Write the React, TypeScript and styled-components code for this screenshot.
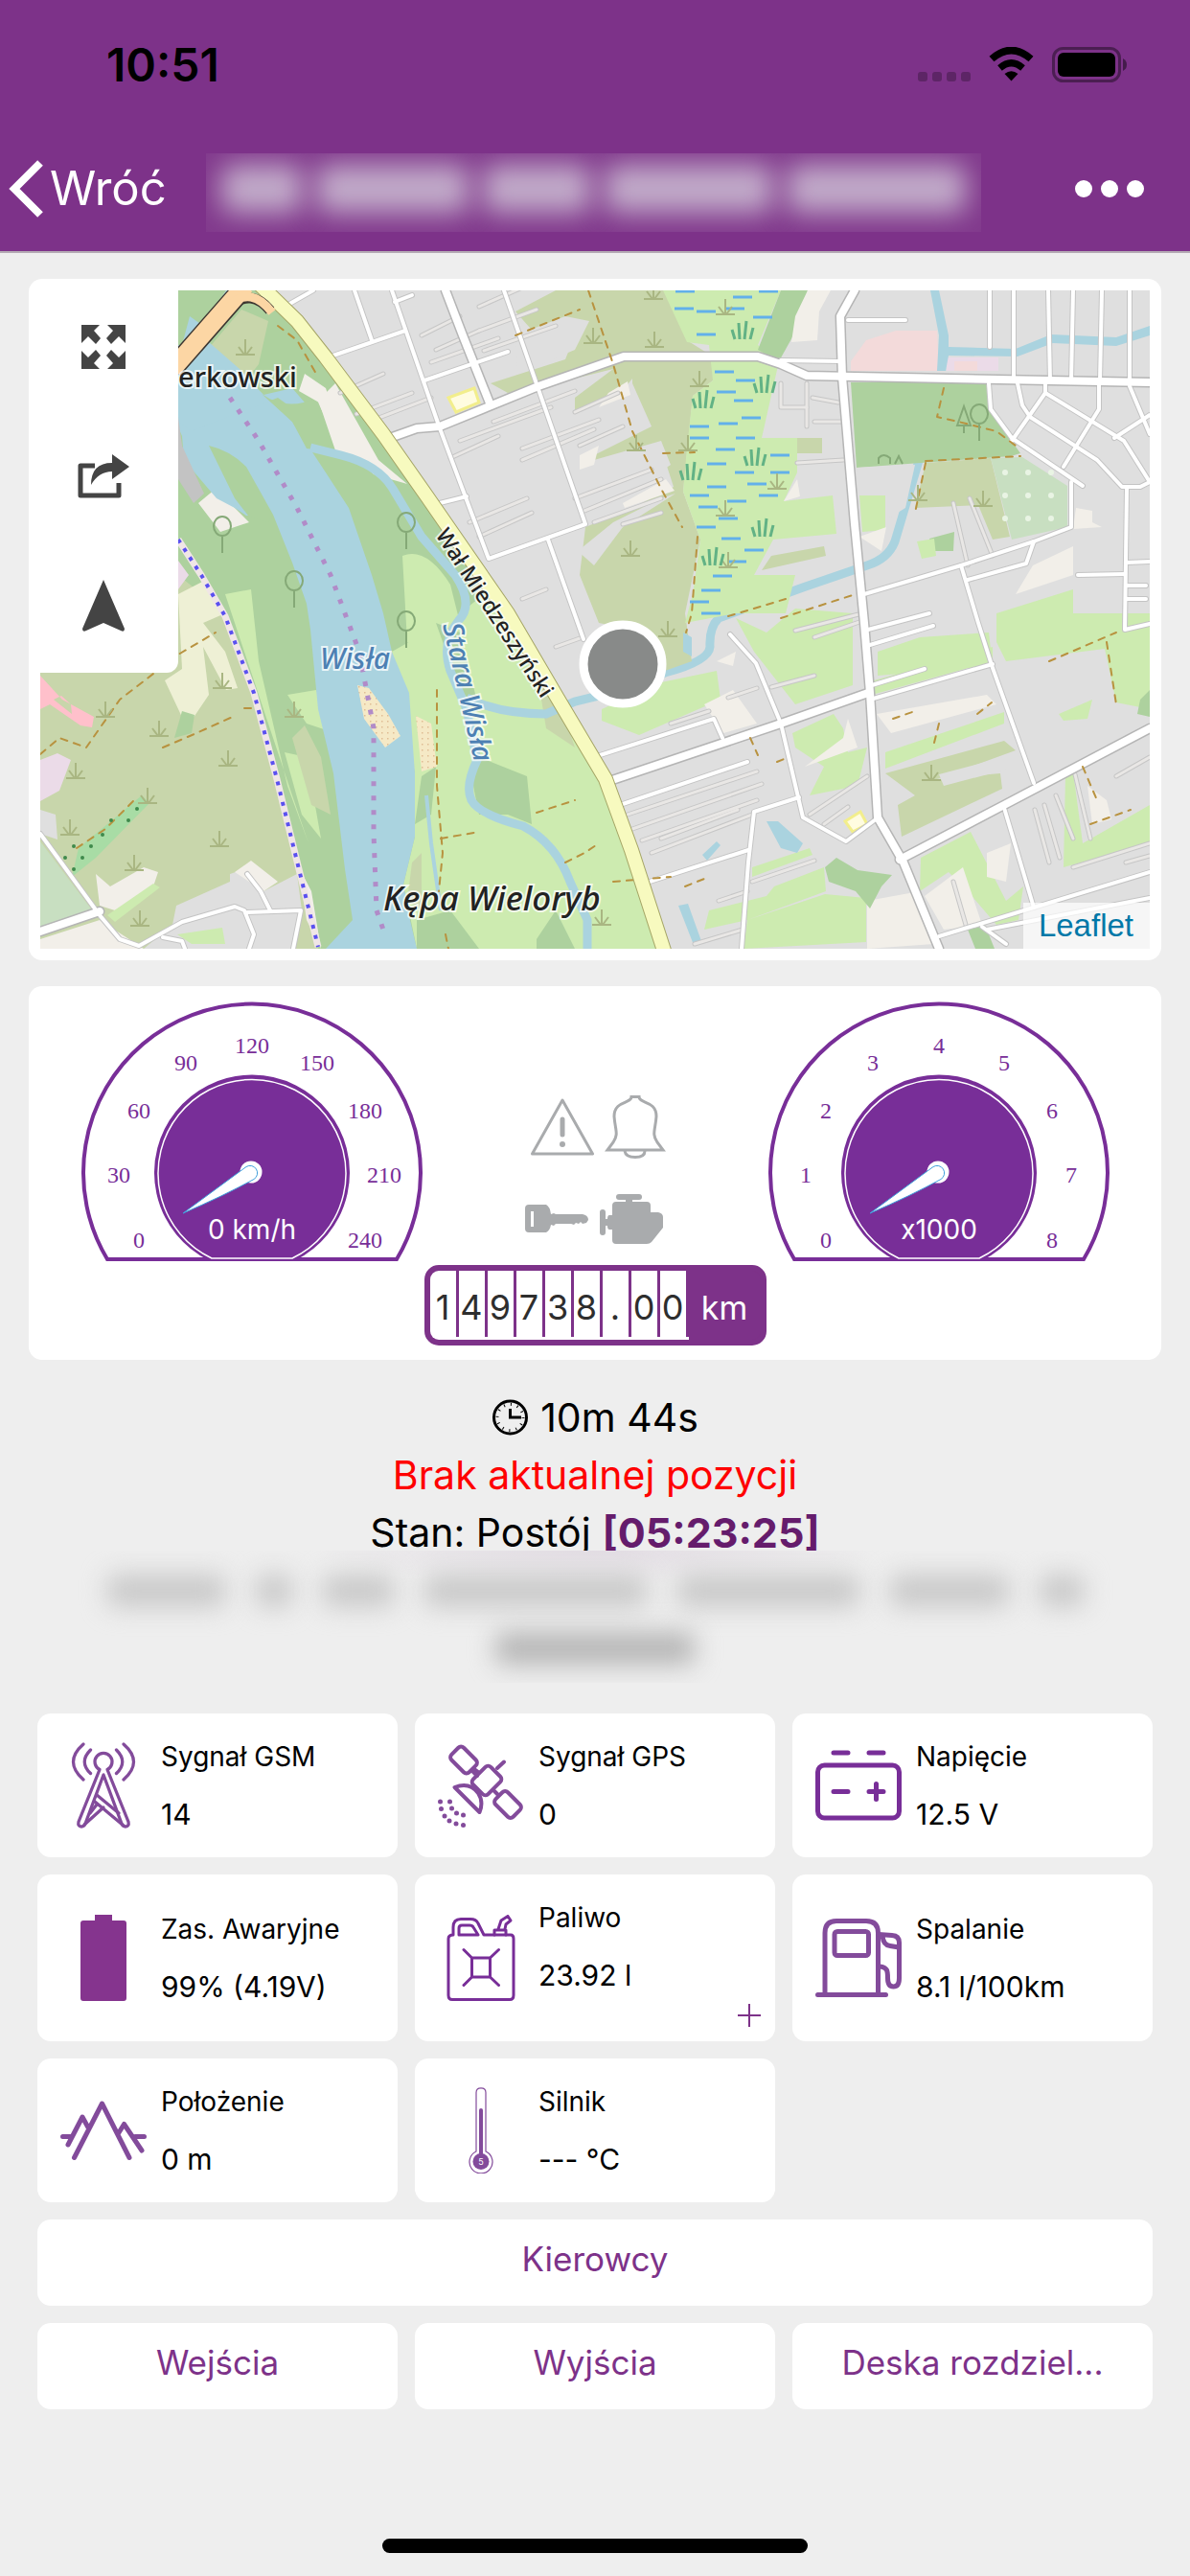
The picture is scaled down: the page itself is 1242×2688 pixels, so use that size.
import React from "react";
import styled, { createGlobalStyle } from "styled-components";

const color = {
  header: "#7d3289",
  gauge: "#782e98",
  icon: "#834b9b",
  page: "#eeeeee",
  muted: "#a9abad",
};

const GlobalStyle = createGlobalStyle`
  *, *::before, *::after { box-sizing: border-box; }
  body {
    margin: 0;
    background: ${color.page};
    color: #000;
    font-family: Inter, "Noto Sans", sans-serif;
  }
  button { font: inherit; color: inherit; background: none; border: 0; padding: 0; cursor: pointer; }
  svg { display: block; }
`;

const Page = styled.div`
  min-height: 100vh;
  display: flex;
  flex-direction: column;
`;

/* ---------- header ---------- */

const Header = styled.header`
  background: ${color.header};
  border-bottom: 2px solid #b3a9b3;
  color: #fff;
`;

const StatusBar = styled.div`
  height: 132px;
  padding: 4px 66px 0 111px;
  display: flex;
  align-items: center;
  justify-content: space-between;
  color: #000;
`;

const Clock = styled.span`
  font-size: 48px;
  line-height: 56px;
  font-weight: 600;
`;

const NavBar = styled.div`
  height: 130px;
  padding: 0 48px 0 9px;
  display: flex;
  align-items: center;
`;

const BackButton = styled.button`
  display: flex;
  align-items: center;
  gap: 7px;
  font-size: 49px;
  line-height: 60px;
`;

const HiddenTitle = styled.div`
  flex: 1;
  height: 82px;
  margin: 8px 98px 0 41px;
  padding: 0 16px 8px;
  overflow: hidden;
  display: flex;
  align-items: center;
  gap: 14px;
  background: rgba(255, 255, 255, 0.04);
`;

const TitleWord = styled.span<{ $grow: number }>`
  flex: ${(p) => p.$grow};
  height: 50px;
  border-radius: 12px;
  background: rgba(205, 190, 212, 0.85);
  filter: blur(14px);
`;

const MoreButton = styled.button`
  display: flex;
  align-items: center;
`;

/* ---------- content ---------- */

const Content = styled.main`
  padding: 27px 30px 0;
  display: flex;
  flex-direction: column;
`;

const Card = styled.section`
  background: #fff;
  border-radius: 14px;
`;

const MapCard = styled(Card)`
  position: relative;
  padding: 12px;
`;

const MapControls = styled.div`
  position: absolute;
  left: 12px;
  top: 12px;
  width: 144px;
  height: 399px;
  background: #fff;
  border-bottom-right-radius: 12px;
  display: grid;
  grid-template-rows: 118px 152px 118px;
`;

const MapControl = styled.button`
  display: flex;
  align-items: center;
  justify-content: center;
  padding-right: 12px;
`;

const Attribution = styled.a`
  position: absolute;
  right: 12px;
  bottom: 12px;
  height: 48px;
  padding: 0 17px 0 16px;
  background: rgba(255, 255, 255, 0.7);
  color: #0078a8;
  font: 33px/48px "Liberation Sans", Arial, sans-serif;
  text-decoration: none;
`;

const GaugeCard = styled(Card)`
  margin-top: 27px;
  padding: 14px 0 15px;
  display: flex;
  justify-content: center;
  align-items: flex-start;
`;

const Center = styled.div`
  padding-top: 100px;
  display: flex;
  flex-direction: column;
  align-items: center;
`;

const Indicators = styled.div`
  display: grid;
  grid-template-columns: 72px 72px;
  column-gap: 3px;
  row-gap: 37px;
`;

const Odometer = styled.div`
  margin-top: 21px;
  height: 84px;
  border: 6px solid ${color.header};
  border-radius: 15px;
  background: ${color.header};
  display: flex;
`;

const Digits = styled.div`
  display: flex;
  padding-bottom: 3px;
  background: #fff;
  border-radius: 9px 0 0 9px;
`;

const Digit = styled.span`
  width: 30px;
  border-right: 3px solid ${color.header};
  text-align: center;
  font-size: 36px;
  line-height: 76px;
  color: #2e2e2e;
`;

const Unit = styled.span`
  width: 75px;
  text-align: center;
  font-size: 34px;
  line-height: 77px;
  color: #fff;
`;

const Summary = styled.section`
  margin-top: 30px;
  text-align: center;
  font-size: 41px;
  line-height: 60px;
`;

const SummaryLine = styled.div<{ $alert?: boolean }>`
  height: 60px;
  display: flex;
  align-items: center;
  justify-content: center;
  gap: 12px;
  color: ${(p) => (p.$alert ? "#ff0000" : "#000")};
`;

const Duration = styled.strong`
  font-size: 43px;
  font-weight: 700;
  color: #651c6c;
`;

const HiddenAddress = styled.div`
  position: relative;
  height: 138px;
  margin-top: -11px;
  padding-top: 25px;
  overflow: hidden;
  background: radial-gradient(300px 36px at 50% 0, #e3dde4, ${color.page});
  display: flex;
  flex-direction: column;
  align-items: center;
  gap: 26px;
`;

const AddressRow = styled.div`
  display: flex;
  gap: 32px;
`;

const AddressWord = styled.span<{ $width: number; $dark?: boolean }>`
  width: ${(p) => p.$width}px;
  height: 34px;
  border-radius: 8px;
  background: ${(p) => (p.$dark ? "#b6b6b6" : "#c9c9c9")};
  filter: blur(13px);
`;

const Metrics = styled.section`
  margin: 32px 9px 0;
  display: grid;
  grid-template-columns: repeat(3, 1fr);
  gap: 18px;
`;

const Metric = styled(Card)`
  position: relative;
  padding: 15px 24px;
  min-height: 150px;
  display: flex;
  align-items: center;
  gap: 15px;
`;

const MetricText = styled.div<{ $extra?: boolean }>`
  line-height: 60px;
  margin-bottom: ${(p) => (p.$extra ? "24px" : "0")};
  white-space: nowrap;
`;

const MetricLabel = styled.div`
  font-size: 28px;
`;

const MetricValue = styled.div`
  font-size: 30px;
`;

const AddButton = styled.button`
  position: absolute;
  right: 15px;
  bottom: 15px;
`;

const Actions = styled.nav`
  margin: 18px 9px 0;
  display: grid;
  grid-template-columns: repeat(3, 1fr);
  gap: 18px;
`;

const Action = styled.button<{ $wide?: boolean }>`
  grid-column: ${(p) => (p.$wide ? "1 / -1" : "auto")};
  height: 90px;
  padding: 0 24px 8px;
  background: #fff;
  border-radius: 14px;
  color: ${color.header};
  font-size: 35px;
  line-height: 48px;
  white-space: nowrap;
`;

const HomeIndicator = styled.div`
  width: 444px;
  height: 15px;
  margin: auto auto 24px;
  border-radius: 8px;
  background: #000;
`;

/* ---------- map ---------- */

const MapSvg = styled.svg`
  width: 100%;
  height: 687px;
`;

const MapLabel = styled.text`
  font-family: "Noto Sans", sans-serif;
  font-weight: 500;
  paint-order: stroke;
  stroke: rgba(255, 255, 255, 0.75);
  stroke-width: 4px;
`;

const wideRoads = [
  "404,458 435,447 459,445 562,403 651,372 791,372 815,380 842,392 1200,399",
  "892,303 877,330 879,393 892,547 902,650 908,723 916,853 943,900 980,990",
  "939,897 1048,840 1200,760",
  "636,815 815,755 906,723",
  "465,303 483,350 512,423",
  "42,972 104,951",
];

const thinRoads = [
  "370,303 388,355", "342,373 423,345", "409,303 459,447 510,583 611,547 526,303",
  "443,397 530,367", "451,527 487,518", "572,563 603,650 609,667", "297,320 327,303", "412,315 430,308",
  "1003,590 1021,650 1036,697 1079,817", "902,620 1003,590 1079,565 1118,550 1118,503",
  "1079,565 1071,588 1010,605", "885,334 945,334", "815,376 877,377",
  "1033,303 1033,362", "1058,303 1058,398", "1094,303 1096,398", "1120,303 1118,398", "1150,303 1148,398", "1179,303 1179,398",
  "1032,400 1034,427 1056,457 1130,507", "1062,400 1067,423 1075,435 1145,480 1171,508 1190,508 1200,503",
  "1091,400 1091,410 1173,460 1200,503", "1091,410 1056,460", "1147,400 1147,427 1110,487",
  "1179,403 1200,453", "1200,433 1163,457", "1176,510 1174,657 1200,651", "1176,587 1200,586", "1176,611 1196,611",
  "1176,625 1196,625", "1125,600 1174,599", "906,657 970,640", "908,673 974,653", "908,730 1036,693", "910,715 965,698",
  "762,662 789,692 815,755 838,853 883,878 914,855", "834,832 787,847 781,900 774,990",
  "620,790 745,750 754,770", "647,840 780,795", "678,920 781,887", "1048,843 1079,947", "980,977 1200,910",
  "1025,967 1050,985", "1030,970 1200,937", "42,870 104,955 125,980 145,987 190,962 245,946 255,950 265,975 260,990",
  "258,952 314,950 306,990", "258,912 272,930 282,950", "170,978 190,982 193,990",
];

const alleys = [
  "355,410 400,390", "372,432 430,410", "385,440 450,415", "455,365 500,345", "440,350 480,330", "450,378 520,353",
  "500,320 545,300", "500,345 560,323", "505,366 580,340", "480,460 575,425", "470,478 520,455", "515,440 600,408",
  "545,480 620,448", "545,468 625,438", "490,545 550,520", "500,560 555,535", "545,625 570,615", "600,520 680,490",
  "610,533 690,500", "620,545 690,520", "605,465 650,445", "600,430 645,410", "650,547 690,535", "580,675 608,665",
  "655,850 790,805", "660,865 795,818", "670,877 790,835", "680,890 785,850", "690,875 770,845", "760,728 790,718",
  "805,717 850,705", "830,658 900,640", "850,665 900,648", "700,755 740,742", "845,850 905,810", "860,860 885,842",
  "1080,845 1095,900", "1090,840 1106,895", "1102,830 1120,875", "1122,808 1138,875", "1120,905 1200,880",
  "1175,900 1200,893", "1165,810 1200,790", "995,525 1010,590", "1012,520 1036,580", "815,400 815,425 842,425",
  "842,400 842,445", "848,415 875,420", "850,440 880,440", "832,483 880,480", "785,920 850,898", "750,940 780,930",
  "725,985 775,970", "995,920 1008,965",
];

const paths = [
  "538,350 605,323", "614,303 640,380 660,450 690,510 712,550", "692,473 725,472", "728,560 722,640 716,660",
  "290,340 310,355 330,390", "42,787 62,770 90,780 125,730 186,683 225,660", "170,780 205,765 245,747", "255,739 268,739",
  "80,885 110,865 140,835", "985,405 978,435 1000,440 1040,450 1060,465", "966,481 1065,476", "966,483 955,535",
  "815,645 893,620", "760,643 820,625", "932,750 955,742", "975,775 980,755", "1020,745 1035,733", "1095,690 1165,660",
  "1155,670 1165,735", "783,770 791,788", "811,795 823,790", "560,848 600,835", "460,875 500,868", "456,720 456,820 462,890 458,930",
  "590,900 610,890 625,880", "1130,800 1145,835", "1138,860 1180,845", "640,920 700,915", "715,925 735,917", "465,975 468,990",
];

const marshDashes: [number, number][] = [
  [705, 304], [792, 304], [765, 310], [704, 322], [727, 325], [757, 322], [786, 331], [727, 349], [768, 397], [746, 388],
  [766, 418], [748, 409], [774, 436], [750, 442], [720, 445], [720, 457], [768, 457], [747, 469], [804, 475], [738, 484],
  [767, 493], [804, 493], [738, 508], [780, 505], [720, 517], [792, 517], [759, 523], [729, 529], [750, 541], [727, 550],
  [753, 562], [777, 574], [759, 586], [744, 601], [732, 616], [720, 628], [732, 640],
];

const tufts: [number, number][] = [
  [256, 370], [619, 358], [682, 312], [757, 328], [683, 362], [730, 403], [664, 470], [718, 470], [811, 510], [757, 538],
  [658, 580], [760, 592], [697, 664], [958, 522], [1026, 528], [972, 814], [110, 748], [166, 768], [232, 718], [79, 812],
  [238, 799], [154, 838], [73, 871], [229, 883], [140, 908], [146, 966], [307, 748], [628, 965],
];

const reeds: [number, number][] = [[775, 354], [798, 410], [734, 426], [788, 486], [721, 501], [796, 560], [744, 590]];

const trees: [number, number][] = [[424, 545], [232, 549], [307, 606], [424, 648], [1022, 432]];

const CityMap = () => (
  <MapSvg viewBox="42 303 1158 687" preserveAspectRatio="xMidYMid slice" role="img" aria-label="Mapa">
    <defs>
      <pattern id="sand" width="6" height="6" patternUnits="userSpaceOnUse">
        <rect width="6" height="6" fill="#f5e9c6" />
        <rect x="2" y="2" width="1.5" height="1.5" fill="#e0bd95" />
      </pattern>
    </defs>
    <rect x="42" y="303" width="1158" height="687" fill="#dfdfdf" />

    {/* west bank and floodplain */}
    <path fill="#add19e" d="M42 303H277L340 373 400 453 447 520 530 640 581 727 632 813 694 990H42Z" />
    <path fill="#cdebb0" d="M409 680L480 640 514 613 581 727 632 813 694 990H435L421 923 433 873 433 807Z" />
    <path fill="#cdebb0" d="M420 580Q445 570 470 610L480 650 465 690 425 670ZM235 620L262 615 270 690 300 820 322 880 305 830ZM300 725L330 720 350 765 320 755ZM297 785L320 790 335 875 315 850Z" />
    <path fill="#add19e" d="M455 650L480 660 500 740 480 720ZM500 790L550 810 555 860 530 850 500 850 492 810ZM440 810L455 800 450 850 433 860ZM560 980L580 950 600 990H560ZM435 960L470 950 500 990H435Z" />
    <path fill="#c8d6ab" d="M218 363L252 323 280 335 270 380 250 406ZM318 757L335 790 345 850 325 840 305 770ZM430 900L440 890 440 950 425 940ZM560 700L590 750 600 780 570 760Z" />
    <path fill="#f2efe9" d="M330 420L350 400 395 480 425 505 390 495 360 465ZM207 525L225 510 260 545 230 555Z" />

    {/* fields in the south-west */}
    <path fill="#c8d6ab" d="M42 303H42V702L186 600 235 640 265 723 289 813 312 907 332 990H42Z" />
    <path fill="#eef0d5" d="M186 620L215 605 235 640 212 650 235 680 248 718 236 720 212 675 218 725 195 759 172 710 190 698Z" />
    <path fill="#ffc0cb" fillRule="evenodd" d="M42 705L65 730 98 748 96 759 84 757 52 735 42 740ZM56 730L75 745 74 735 64 726Z" />
    <path fill="#ebdbe8" d="M42 793L60 786 74 793 62 825 42 836ZM186 585L197 600 186 615Z" />
    <path fill="#a8dca5" d="M82 885L148 830 156 838 100 895 75 915Z" />
    <path fill="#add19e" d="M190 742L203 746 200 765 182 770Z" />
    <path fill="#dfdfdf" d="M42 845L58 850 60 876 42 870ZM184 945L240 920 240 912 260 905 275 930 310 912 315 950 308 990H150L180 965Z" />
    <path fill="#c8dfc1" d="M42 878L100 955 42 975Z" />
    <path fill="#f2efe9" d="M100 912L115 925 150 905 165 910 160 925 120 950 104 945ZM42 980L104 960 150 990H42ZM245 910L262 898 290 920 275 930ZM312 905L325 930 335 990 320 960Z" />
    <path fill="#cdebb0" d="M112 955L160 922 167 926 120 962ZM185 975L232 968 235 985 200 985Z" />

    {/* river */}
    <path fill="#aad3df" d="M170 410L186 303H245L186 400V345L218 363 250 395 273 410 305 440 336 487 364 530 388 600 400 640 409 680 427 723 433 807 433 873 421 923 428 960 435 990H340L368 960 360 907 348 807 332 740 324 657 320 630 305 587 285 537 257 538 245 530 226 520 192 480 190 455Z" />
    <path fill="#aad3df" d="M186 375L210 350 250 385 275 412 305 405 318 420 308 428 290 415 200 450 186 440Z" />
    <path fill="#add19e" d="M186 303H236L212 340 198 330 190 360H186Z" />
    <path fill="#add19e" d="M218 465Q240 470 257 487L285 537 280 545 259 538 245 520Z" />
    <path fill="#add19e" d="M273 411Q300 430 330 415L350 460 335 470 320 468 305 440Z" />
    <path fill="#f2efe9" d="M318 390L340 405 358 460 395 490 350 470 333 420 312 408Z" />
    <path fill="#c3c3c3" d="M186 435L190 465 213 515 202 525 186 500Z" />
    <path fill="url(#sand)" d="M373 715L385 718 405 745 418 768 402 780 380 750ZM434 747L450 755 456 800 440 805Z" />
    <g fill="none" stroke="#aad3df" strokeWidth="9">
      <path d="M324 467L356 475Q395 485 410 510L440 560 475 600Q495 630 479 647 460 670 470 700L487 740 498 793Q485 820 492 835 500 850 546 862 580 880 595 920L613 960V990" />
      <path d="M487 728Q520 745 570 745L600 732 650 720 694 702Q740 690 741 675 740 655 750 645L838 613 905 590Q927 583 934 565L982 403" />
      <path d="M445 830L450 880 460 950" strokeWidth="4" />
    </g>
    <path stroke="#b18bc8" strokeWidth="5" strokeDasharray="5 10" fill="none" d="M240 415L270 460 310 530 345 600 375 680 390 760V870L393 950 400 970" />
    <path stroke="#f0e6e6" strokeWidth="7" fill="none" d="M186 563L210 600 235 643 265 723 289 813 312 907 332 988" />
    <path stroke="#5a50f0" strokeWidth="4" strokeDasharray="4 7" fill="none" d="M186 563L210 600 235 643 265 723 289 813 312 907 332 988" />

    {/* meadow and marsh east of the embankment */}
    <path fill="#c8d6ab" d="M538 325L580 303H700L720 357 744 372 744 397 723 413 713 513 731 563 715 640 722 690 694 700 650 655 625 650 605 600 611 550 660 530 703 508 694 480 620 500 610 480 680 445 660 400 600 430 600 415 640 385 560 405 530 410 512 400 590 375 600 350 560 350Z" />
    <path fill="#dfdfdf" d="M538 350L590 330 615 335 600 365 540 390ZM575 440L640 420 660 395 660 410 600 450 620 480 690 460 700 485 640 525 605 530ZM603 575L640 545 690 520 705 515 650 550 620 590Z" />
    <path fill="#f2efe9" d="M635 410L655 398 658 412 625 425ZM650 525L695 500 704 512 652 530ZM605 475L625 465 620 485 605 490Z" />
    <path fill="#cdebb0" d="M692 303H815L791 360 813 377 795 457H832V493L818 523 869 517 873 557 807 563 787 600 830 600 820 640 768 640 715 650 723 620 731 563 713 513 717 467 723 413 744 397 740 360 717 357Z" />
    <path fill="#add19e" d="M815 303H843L828 350 813 377 791 365Z" />
    <path fill="#f2efe9" d="M843 303H867L855 325 853 355 826 357 830 330ZM818 523L832 500 835 518Z" />
    <path fill="#c8d6ab" d="M832 457H858V473H832ZM805 580L860 570 862 580 795 595ZM966 483L1034 478 1054 560 1036 563 1021 527 955 530Z" />
    <path fill="#add19e" d="M888 399H1030L1034 430 1065 473 1055 476 894 488ZM970 562L996 555 995 575 975 575Z" />
    <path fill="#dfdfdf" d="M894 488L955 485 945 530 896 560Z" />
    <path fill="#c8dfc1" d="M1034 478L1067 477 1114 507V550L1056 563Z" />
    <path fill="#f3dada" d="M888 387V377L904 355 935 345H978L980 387Z" />
    <path fill="#ebdbe8" d="M988 373H1042V387H988Z" />
    <path fill="#f3dada" d="M996 377H1020V387H996Z" />
    <path fill="#aad3df" d="M971 303H980L990 350V362L1060 364 1097 349 1165 352 1200 340V350L1165 361 1099 358 1062 372 990 371 987 387H978L980 350Z" />
    <path fill="#cdebb0" d="M897 517H924V553L900 555ZM957 565L975 562 977 580 962 583ZM800 660L830 635 890 640V715L830 735 787 680 768 645ZM628 740L690 712 748 700 752 730 667 767 628 752ZM916 680L960 665 1032 660 1036 695 916 705ZM1040 640L1120 615V640H1200V740L1165 733 1153 677 1050 690 1040 670ZM1105 745L1140 730 1135 750 1110 752ZM924 785L1048 743V755L924 802ZM827 765L870 745 880 760 885 785 905 780 895 820 845 830 860 800 830 780ZM961 895L1013 868 1050 940 1068 925 1063 960 1040 965 1010 930 990 910 960 930ZM1112 810L1120 805 1130 880 1200 840V880L1110 905ZM780 960L861 933 904 937V983L776 990ZM808 925L860 905 862 930 780 960 735 970 740 950 800 935ZM785 905L845 885 848 892 785 915ZM905 712L1036 675 1036 690 910 725Z" />
    <path fill="#f2efe9" d="M748 690L765 695 768 680ZM735 735L765 720 790 755 755 765ZM1078 590L1120 570V600L1060 620ZM1123 530L1140 533 1140 545 1150 550 1120 552ZM915 745L1030 725 1040 735 930 765ZM840 800L880 770 885 750 895 780ZM905 940L960 930 975 985 905 990ZM965 935L1005 905 1025 965 985 970ZM1030 890L1055 880 1050 920 1030 915ZM1135 820L1155 835 1160 855 1140 860ZM897 560L925 550 920 575Z" />
    <path fill="#c8d6ab" d="M924 807L1048 773 1060 783 978 813 1044 807 1046 823 941 873 937 840 955 830Z" />
    <path fill="#dfdfdf" d="M980 808L1048 790 1050 803 985 820Z" />
    <path fill="#add19e" d="M873 895L895 908 931 913 920 925 908 948 893 930 865 920 861 905ZM1190 730L1200 720V748L1187 745ZM1010 970L1028 965 1038 990H1018Z" />
    <path fill="#aad3df" d="M800 857L812 857 838 880 832 890 815 885ZM733 892L748 878 752 882 738 898ZM708 945L718 943 732 982 724 986ZM713 660L722 665 722 685 713 680Z" />
    <path fill="#fffce0" stroke="#f2ee8c" strokeWidth="3" d="M468 415L495 405 500 420 476 430ZM882 857L898 847 905 860 890 868Z" />

    {/* streets */}
    <g fill="none" strokeLinejoin="round" strokeLinecap="round">
      {alleys.map((p) => <polyline key={p} points={p} stroke="#c6c6c6" strokeWidth="5" />)}
      {alleys.map((p) => <polyline key={p} points={p} stroke="#e9e7e5" strokeWidth="3" />)}
      {thinRoads.map((p) => <polyline key={p} points={p} stroke="#c4c4c4" strokeWidth="6" />)}
      {wideRoads.map((p) => <polyline key={p} points={p} stroke="#b5b5b5" strokeWidth="11" />)}
      {thinRoads.map((p) => <polyline key={p} points={p} stroke="#fff" strokeWidth="4" />)}
      {wideRoads.map((p) => <polyline key={p} points={p} stroke="#fff" strokeWidth="8" />)}
      {paths.map((p) => <polyline key={p} points={p} stroke="#b8923f" strokeWidth="2" strokeDasharray="7 7" />)}
    </g>
    <g fill="none" strokeLinejoin="round">
      <path stroke="#a5a566" strokeWidth="16" d="M270 296L310 335 340 373 400 453 447 520 530 640 581 727 632 813 659 887 694 995" />
      <path stroke="#f7fabf" strokeWidth="14" d="M270 296L310 335 340 373 400 453 447 520 530 640 581 727 632 813 659 887 694 995" />
      <path stroke="#3b3530" strokeWidth="22" d="M180 385L252 303" />
      <path stroke="#3b3530" strokeWidth="11" d="M240 320Q262 300 282 324" />
      <path stroke="#fcd6a4" strokeWidth="19" d="M180 385L256 298" />
      <path stroke="#fcd6a4" strokeWidth="9" d="M240 318Q262 298 284 326" />
    </g>

    {/* vegetation symbols */}
    <g stroke="#62b0ea" strokeWidth="3">
      {marshDashes.map(([x, y]) => <path key={`${x}-${y}`} d={`M${x} ${y}h20`} />)}
    </g>
    <g fill="none" stroke="#a9b682" strokeWidth="2">
      {tufts.map(([x, y]) => <path key={`${x}-${y}`} d={`M${x - 10} ${y}h20M${x} ${y}v-16M${x - 1} ${y}l-6 -8M${x + 1} ${y}l6 -8`} />)}
    </g>
    <g fill="none" stroke="#62b285" strokeWidth="3">
      {reeds.map(([x, y]) => <path key={`${x}-${y}`} d={`M${x - 8} ${y}l-3 -10M${x - 3} ${y}l-1 -17M${x + 2} ${y}l2 -19M${x + 8} ${y}l3 -12`} />)}
    </g>
    <g fill="none" stroke="#85a977" strokeWidth="2">
      {trees.map(([x, y]) => <path key={`${x}-${y}`} d={`M${x} ${y + 28}V${y + 10}M${x - 9} ${y}a9 10 0 1 1 18 0a9 10 0 1 1 -18 0`} />)}
      <path d="M1006 452V444M999 444L1006 424 1013 444ZM917 484V478Q922 472 929 478V484M934 484L938 476 942 484" />
    </g>
    <g fill="#e9f4e4">
      {[1049, 1073, 1097].map((x) => [493, 517, 541].map((y) => <circle key={`${x}-${y}`} cx={x} cy={y} r="3" />))}
    </g>
    <g fill="#3f8a4c">
      {[[143, 844], [116, 856], [134, 856], [107, 871], [95, 883], [77, 883], [68, 895], [86, 895], [77, 907]].map(([x, y]) => (
        <circle key={`${x}-${y}`} cx={x} cy={y} r="2" />
      ))}
    </g>

    {/* place names */}
    <MapLabel x="186" y="404" fontSize="29" fill="#222">erkowski</MapLabel>
    <MapLabel x="334" y="698" fontSize="30" fontStyle="italic" fill="#4d80b3">Wisła</MapLabel>
    <MapLabel x="400" y="950" fontSize="35" fontStyle="italic" fill="#222">Kępa Wieloryb</MapLabel>
    <MapLabel fontSize="23" fill="#222" transform="translate(454 558) rotate(57)">Wał Miedzeszyński</MapLabel>
    <MapLabel fontSize="29" fontStyle="italic" fill="#4d80b3" transform="translate(462 652) rotate(77)">Stara Wisła</MapLabel>

    <circle cx="650" cy="693" r="41" fill="#888a89" stroke="#fff" strokeWidth="9" />
  </MapSvg>
);

/* ---------- gauges ---------- */

const GaugeSvg = styled.svg`
  width: 360px;
  height: 276px;
  flex: none;
`;

const TickLabel = styled.text`
  font: 24px "Liberation Serif", "Times New Roman", serif;
  fill: ${color.gauge};
  text-anchor: middle;
`;

const GaugeValue = styled.text`
  font: 28px Inter, sans-serif;
  fill: #fff;
  text-anchor: middle;
`;

const tickPositions: [number, number][] = [
  [62, 259], [41, 191], [62, 124], [111, 74], [180, 56], [248, 74], [298, 124], [318, 191], [298, 259],
];

const Gauge = ({ ticks, value, label }: { ticks: string[]; value: string; label: string }) => (
  <GaugeSvg viewBox="0 0 360 276" role="img" aria-label={label}>
    <path d="M29 271A176 176 0 1 1 331 271Z" fill="#fff" stroke={color.gauge} strokeWidth="4" />
    <path d="M135 271A101 101 0 1 1 225 271Z" fill={color.gauge} stroke={color.gauge} strokeWidth="2" />
    <path d="M138 270A98 98 0 1 1 222 270Z" fill={color.gauge} stroke="#fff" strokeWidth="1.5" />
    {ticks.map((t, i) => (
      <TickLabel key={t} x={tickPositions[i][0]} y={tickPositions[i][1]}>{t}</TickLabel>
    ))}
    <circle cx="179" cy="180" r="11.5" fill="#fff" />
    <path d="M108 223L174 174.5A7.5 7.5 0 1 1 182 187.500Q150 205 108 223Z" fill="#fff" stroke="#3f9fdc" strokeWidth="1" />
    <GaugeValue x="180" y="250">{value}</GaugeValue>
  </GaugeSvg>
);

/* ---------- icons ---------- */

const ExpandIcon = () => (
  <svg width="46" height="46" viewBox="0 0 46 46" fill="#444">
    <path d="M0 0H19L13 6 20 14 15 20 7 12 0 19ZM46 0V19L39 12 31 20 26 14 33 6 27 0ZM0 46V27L7 34 15 26 20 32 13 40 19 46ZM46 46H27L33 40 26 32 31 26 39 34 46 27Z" />
  </svg>
);

const ShareIcon = () => (
  <svg width="54" height="46" viewBox="0 0 54 46">
    <path d="M18 12H3V43H43V30" fill="none" stroke="#444" strokeWidth="5" strokeLinejoin="round" />
    <path d="M14 32Q14 9 36 9V0L54 13 36 26V18Q22 18 14 32Z" fill="#444" />
  </svg>
);

const ArrowIcon = () => (
  <svg width="46" height="56" viewBox="0 0 46 56" fill="#444">
    <path d="M23 1L45 52Q45 56 41 54L23 46 5 54Q1 56 1 52Z" />
  </svg>
);

const StatusIcons = () => (
  <svg width="219" height="38" viewBox="957 49 219 38" aria-hidden="true">
    <g fill="#000" opacity="0.25">
      {[963, 978, 993, 1008].map((x) => <rect key={x} x={x - 5} y="75" width="10" height="10" rx="3" />)}
    </g>
    <g fill="none" stroke="#000">
      <path d="M1035 61.500Q1055.500 43.500 1076 61.500" strokeWidth="7.500" />
      <path d="M1043.500 71Q1055.500 60.500 1067.500 71" strokeWidth="7" />
    </g>
    <path d="M1048.500 77Q1055.500 71.500 1062.500 77L1055.500 84.500Z" />
    <rect x="1099.500" y="50.500" width="69" height="34" rx="10" fill="none" stroke="#000" strokeWidth="3" opacity="0.4" />
    <rect x="1104" y="55" width="60" height="25" rx="6" />
    <path d="M1172 61Q1176 63 1176 67.500 1176 72 1172 74Z" opacity="0.45" />
  </svg>
);

const WarningIcon = () => (
  <svg width="72" height="66" viewBox="0 0 72 66" fill="none" stroke={color.muted} strokeLinecap="round" strokeLinejoin="round">
    <path d="M39 5L70.500 61H7.500Z" strokeWidth="3" />
    <path d="M39 25V41" strokeWidth="5" />
    <circle cx="39" cy="51" r="3" fill={color.muted} stroke="none" />
  </svg>
);

const BellIcon = () => (
  <svg width="72" height="66" viewBox="0 0 72 66" fill="none" stroke={color.muted} strokeWidth="3">
    <path d="M36 1.500H44C44 9 62 5 62 22C61 36 57 40 63 49L69 57H11L17 49C23 40 19 36 18 22C18 5 36 9 36 1.500Z" />
    <path d="M29 58Q30 64.500 40 64.500T50 58" />
  </svg>
);

const KeyIcon = () => (
  <svg width="72" height="53" viewBox="0 0 72 53" fill={color.muted}>
    <path fillRule="evenodd" d="M4 11H22Q26 13 27 21L30 20 32 21H60Q66 22 66 27L64 30 60 31 58 29 56 31 53 30 51 32 48 31H32L30 33 27 32Q26 38 22 40H4Q0 40 0 36V15Q0 11 4 11ZM6 18V34H9V18Z" />
  </svg>
);

const EngineIcon = () => (
  <svg width="72" height="53" viewBox="0 0 72 53" fill={color.muted}>
    <rect x="20" width="27" height="6" rx="3" />
    <rect x="30" y="4" width="7" height="6" />
    <path d="M20 8H52Q56 8 56 12V19H64Q69 20 69 24V35L57 50Q55 52 52 52H20Q16 52 16 48V37H13Q11 37 11 33H9V40Q9 43 6 43T3 40V19Q3 16 6 16T9 19V26H11Q11 22 13 22H16V12Q16 8 20 8Z" />
  </svg>
);

const TimeIcon = () => (
  <svg width="39" height="38" viewBox="0 0 39 38" fill="none" stroke="#000">
    <circle cx="19.500" cy="19" r="17" strokeWidth="3" />
    <circle cx="19.500" cy="19" r="13.500" strokeWidth="3" strokeDasharray="1 6.070" />
    <path d="M19.500 10V19H31" strokeWidth="3" />
  </svg>
);

const Icon90Svg = styled.svg`
  width: 90px;
  height: 90px;
  flex: none;
`;

const Icon90 = (props: React.SVGProps<SVGSVGElement>) => (
  <Icon90Svg
    viewBox="0 0 90 90"
    fill={props.fill ?? "none"}
    stroke={props.stroke ?? color.icon}
    strokeWidth={props.strokeWidth}
    strokeLinecap="round"
    strokeLinejoin="round"
    aria-hidden="true"
  >
    {props.children}
  </Icon90Svg>
);

const TowerIcon = () => (
  <Icon90 strokeWidth="3.3">
    <path d="M24 2Q3 20.500 24 39M31.500 8Q19 20.500 31.500 32.500M66 2Q87 20.500 66 39M58.500 8Q71 20.500 58.500 32.500" />
    <path d="M41 28.500A9 9 0 1 1 49 28.500L71 83Q72 88 68 88 65 88 64 85L45 34 26 85Q25 88 22 88 18 88 19 83Z" />
    <path d="M38 55L61 74M36 62L66 87M45 68L25 86M38 65L31 74" />
  </Icon90>
);

const SatelliteIcon = () => (
  <Icon90 strokeWidth="4">
    <rect x="-9" y="-13" width="18" height="26" rx="4" transform="translate(27 18.500) rotate(-45)" />
    <rect x="-11" y="-13" width="22" height="26" rx="4" transform="translate(51 40) rotate(45)" />
    <rect x="-9" y="-13" width="18" height="26" rx="4" transform="translate(73 65) rotate(-45)" />
    <path d="M37 31L41 35M38 28L42 31M59 51L63 55M62 27L69 20.500M17.500 47L43.500 73Q48 62 42 53 33 41 17.500 47Z" />
    <g fill={color.icon} stroke="none">
      {[[2.5, 62], [12.500, 62], [3.5, 69.500], [14.500, 69], [7, 77], [19.500, 74], [12, 82], [26.500, 76], [19, 85], [26.500, 86.500]].map(([x, y]) => (
        <circle key={`${x}-${y}`} cx={x} cy={y} r="2.500" />
      ))}
    </g>
  </Icon90>
);

const AccumulatorIcon = () => (
  <Icon90 stroke={color.gauge} strokeWidth="5">
    <rect x="2.500" y="24" width="85" height="55" rx="7" />
    <path d="M19 11H34M56 11H71M19 51.500H34M56 51.500H71M63.500 43.500V59.500" />
  </Icon90>
);

const BatteryIcon = () => (
  <Icon90 stroke="none" fill="#85348e">
    <path d="M36 0H54V6H66Q69 6 69 9V87Q69 90 66 90H24Q21 90 21 87V9Q21 6 24 6H36Z" />
  </Icon90>
);

const CanisterIcon = () => (
  <Icon90 stroke={color.gauge} strokeWidth="3">
    <path d="M16 21V13Q16 4.500 24 4.500H34Q40 4.500 42 9L48 21H76Q79 21 79 25V84Q79 88.500 75 88.500H15Q11 88.500 11 84V25Q11 21 16 21Z" />
    <path d="M22 21V14Q22 11 25 11H33Q36 11 37 13L42 21ZM59 21V16H71V21M63 15L66 6 73 1.500 76 6 71 10 70 15" />
    <path d="M35.500 45H54.500V65H35.500ZM27 36.500L35.500 45M63.500 36.500L54.500 45M27 73.500L35.500 65M63.500 73.500L54.500 65" />
  </Icon90>
);

const PumpIcon = () => (
  <Icon90 strokeWidth="5">
    <path d="M2.500 83.500H73.500M10 83V19Q10 6.500 22 6.500H53Q65.500 6.500 65.500 19V83" />
    <rect x="20" y="17.500" width="35.500" height="25" rx="3" />
    <path d="M66 20.500L80 21.500Q87.500 22 87.500 29V66Q87.500 75 81.500 75T75.500 66C75.500 58 75 55 67 54M70 22Q71 32 78 32.500L87 34" />
  </Icon90>
);

const MountainIcon = () => (
  <Icon90 strokeWidth="5">
    <path d="M14.500 73.500L43.500 17 72 73.500M8 60L23 31 29 42M60 49L66.500 38.500 85 66M2.500 51.500H12M78 51.500H87.500" />
  </Icon90>
);

const BulbText = styled.text`
  font: 9px Inter, sans-serif;
  fill: #fff;
  stroke: none;
  text-anchor: middle;
`;

const ThermometerIcon = () => (
  <Icon90 strokeWidth="1.200">
    <path d="M40 67V5.500Q40 .8 45 .8T50 5.500V67A12 12 0 1 1 40 67Z" />
    <path d="M45 24V72" strokeWidth="4" />
    <circle cx="45" cy="77.500" r="8.500" fill={color.icon} stroke="none" />
    <BulbText x="45" y="81">5</BulbText>
  </Icon90>
);

/* ---------- page ---------- */

const metrics: { label: string; value: string; icon: React.ReactNode; addable?: boolean }[] = [
  { label: "Sygnał GSM", value: "14", icon: <TowerIcon /> },
  { label: "Sygnał GPS", value: "0", icon: <SatelliteIcon /> },
  { label: "Napięcie", value: "12.5 V", icon: <AccumulatorIcon /> },
  { label: "Zas. Awaryjne", value: "99% (4.19V)", icon: <BatteryIcon /> },
  { label: "Paliwo", value: "23.92 l", icon: <CanisterIcon />, addable: true },
  { label: "Spalanie", value: "8.1 l/100km", icon: <PumpIcon /> },
  { label: "Położenie", value: "0 m", icon: <MountainIcon /> },
  { label: "Silnik", value: "--- °C", icon: <ThermometerIcon /> },
];

export default function App() {
  return (
    <Page>
      <GlobalStyle />
      <Header>
        <StatusBar>
          <Clock>10:51</Clock>
          <StatusIcons />
        </StatusBar>
        <NavBar>
          <BackButton type="button">
            <svg width="36" height="60" viewBox="0 0 36 60" fill="none" stroke="#fff" strokeWidth="8">
              <path d="M33 3L6 30 33 57" />
            </svg>
            Wróć
          </BackButton>
          <HiddenTitle>
            {[80, 150, 105, 165, 175].map((w, i) => <TitleWord key={i} $grow={w} />)}
          </HiddenTitle>
          <MoreButton type="button" aria-label="Więcej">
            <svg width="72" height="18" viewBox="0 0 72 18" fill="#fff">
              <circle cx="9" cy="9" r="9" />
              <circle cx="36" cy="9" r="9" />
              <circle cx="63" cy="9" r="9" />
            </svg>
          </MoreButton>
        </NavBar>
      </Header>

      <Content>
        <MapCard>
          <CityMap />
          <MapControls>
            <MapControl type="button" aria-label="Pełny ekran"><ExpandIcon /></MapControl>
            <MapControl type="button" aria-label="Udostępnij"><ShareIcon /></MapControl>
            <MapControl type="button" aria-label="Nawiguj"><ArrowIcon /></MapControl>
          </MapControls>
          <Attribution href="#leaflet">Leaflet</Attribution>
        </MapCard>

        <GaugeCard>
          <Gauge label="Prędkość" value="0 km/h" ticks={["0", "30", "60", "90", "120", "150", "180", "210", "240"]} />
          <Center>
            <Indicators>
              <WarningIcon />
              <BellIcon />
              <KeyIcon />
              <EngineIcon />
            </Indicators>
            <Odometer>
              <Digits>
                {"149738.00".split("").map((d, i) => <Digit key={i}>{d}</Digit>)}
              </Digits>
              <Unit>km</Unit>
            </Odometer>
          </Center>
          <Gauge label="Obroty" value="x1000" ticks={["0", "1", "2", "3", "4", "5", "6", "7", "8"]} />
        </GaugeCard>

        <Summary>
          <SummaryLine><TimeIcon />10m 44s</SummaryLine>
          <SummaryLine $alert>Brak aktualnej pozycji</SummaryLine>
          <SummaryLine>Stan: Postój <Duration>[05:23:25]</Duration></SummaryLine>
        </Summary>
        <HiddenAddress>
          <AddressRow>
            {[123, 38, 74, 232, 190, 124, 46].map((w) => <AddressWord key={w} $width={w} />)}
          </AddressRow>
          <AddressRow>
            <AddressWord $width={208} $dark />
          </AddressRow>
        </HiddenAddress>

        <Metrics>
          {metrics.map((m) => (
            <Metric key={m.label}>
              {m.icon}
              <MetricText $extra={m.addable}>
                <MetricLabel>{m.label}</MetricLabel>
                <MetricValue>{m.value}</MetricValue>
              </MetricText>
              {m.addable && (
                <AddButton type="button" aria-label="Dodaj tankowanie">
                  <svg width="24" height="24" viewBox="0 0 24 24" stroke={color.header} strokeWidth="2">
                    <path d="M12 0V24M0 12H24" />
                  </svg>
                </AddButton>
              )}
            </Metric>
          ))}
        </Metrics>

        <Actions>
          <Action type="button" $wide>Kierowcy</Action>
          <Action type="button">Wejścia</Action>
          <Action type="button">Wyjścia</Action>
          <Action type="button">Deska rozdziel...</Action>
        </Actions>
      </Content>
      <HomeIndicator />
    </Page>
  );
}
